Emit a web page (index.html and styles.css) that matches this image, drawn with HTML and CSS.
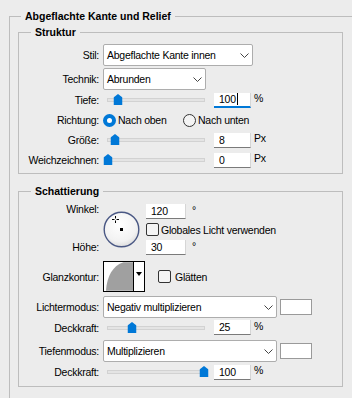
FILE: index.html
```html
<!DOCTYPE html>
<html lang="de">
<head>
  <meta charset="UTF-8">
  <title>Abgeflachte Kante und Relief</title>
  <link rel="stylesheet" href="styles.css">
</head>
<body>
  <fieldset class="group outer">
    <legend>Abgeflachte Kante und Relief</legend>

    <fieldset class="group sub struktur">
      <legend>Struktur</legend>

      <div class="row tall gap">
        <span class="lbl">Stil:</span>
        <div class="select w-stil">
          <span>Abgeflachte Kante innen</span>
          <svg class="chev" width="9" height="5" viewBox="0 0 9 5"><polyline points="0.5,0.5 4.5,4.5 8.5,0.5" fill="none" stroke="#444" stroke-width="1"/></svg>
        </div>
      </div>

      <div class="row tall">
        <span class="lbl">Technik:</span>
        <div class="select w-technik">
          <span>Abrunden</span>
          <svg class="chev" width="9" height="5" viewBox="0 0 9 5"><polyline points="0.5,0.5 4.5,4.5 8.5,0.5" fill="none" stroke="#444" stroke-width="1"/></svg>
        </div>
      </div>

      <div class="row">
        <span class="lbl">Tiefe:</span>
        <div class="slider"><svg class="thumb" style="left:10%" width="9" height="11" viewBox="0 0 9 11"><path d="M4.5 0 L9 3.5 V11 H0 V3.5 Z" fill="#0078d7"/></svg></div>
        <div class="num active">100<span class="caret"></span></div>
        <span class="unit">%</span>
      </div>

      <div class="row">
        <span class="lbl">Richtung:</span>
        <label class="opt first"><span class="radio on"></span>Nach oben</label>
        <label class="opt"><span class="radio"></span>Nach unten</label>
      </div>

      <div class="row">
        <span class="lbl">Größe:</span>
        <div class="slider"><svg class="thumb" style="left:7.7%" width="9" height="11" viewBox="0 0 9 11"><path d="M4.5 0 L9 3.5 V11 H0 V3.5 Z" fill="#0078d7"/></svg></div>
        <div class="num">8</div>
        <span class="unit">Px</span>
      </div>

      <div class="row">
        <span class="lbl">Weichzeichnen:</span>
        <div class="slider"><svg class="thumb" style="left:0%" width="9" height="11" viewBox="0 0 9 11"><path d="M4.5 0 L9 3.5 V11 H0 V3.5 Z" fill="#0078d7"/></svg></div>
        <div class="num">0</div>
        <span class="unit">Px</span>
      </div>
    </fieldset>

    <fieldset class="group sub schattierung">
      <legend>Schattierung</legend>

      <div class="angle">
        <span class="glbl winkel">Winkel:</span>
        <svg class="dial" width="37" height="37" viewBox="0 0 37 37">
          <defs>
            <radialGradient id="dialfill" cx="0.45" cy="0.35" r="0.7">
              <stop offset="0" stop-color="#ffffff"/>
              <stop offset="0.7" stop-color="#f2f2f2"/>
              <stop offset="1" stop-color="#d8d8d8"/>
            </radialGradient>
          </defs>
          <circle cx="18.5" cy="18.5" r="17.3" fill="url(#dialfill)" stroke="#4a5884" stroke-width="1.4"/>
          <rect x="17" y="17" width="3" height="3" fill="#000"/>
          <path d="M9 8.5 H11.5 M13.5 8.5 H16 M12.5 5 V7.5 M12.5 9.5 V12" stroke="#000" stroke-width="1"/>
        </svg>
        <div class="cell r1"><div class="num short">120</div><span class="unit deg">°</span></div>
        <label class="cell r2"><span class="check"></span>Globales Licht verwenden</label>
        <span class="glbl hoehe">Höhe:</span>
        <div class="cell r3"><div class="num short">30</div><span class="unit deg">°</span></div>
      </div>

      <div class="row contour-row">
        <span class="lbl">Glanzkontur:</span>
        <div class="contour">
          <svg width="30" height="29" viewBox="0 0 30 29"><path d="M2 29 C3 15 9 3 20 0 L30 0 L30 29 Z" fill="#a0a0a0"/></svg>
          <span class="contour-arrow"><svg width="6" height="4" viewBox="0 0 6 4"><path d="M0 0 H6 L3 4 Z" fill="#000"/></svg></span>
        </div>
        <label class="opt smooth"><span class="check"></span>Glätten</label>
      </div>

      <div class="row tall mode-row">
        <span class="lbl">Lichtermodus:</span>
        <div class="select w-mode">
          <span>Negativ multiplizieren</span>
          <svg class="chev" width="9" height="5" viewBox="0 0 9 5"><polyline points="0.5,0.5 4.5,4.5 8.5,0.5" fill="none" stroke="#444" stroke-width="1"/></svg>
        </div>
        <span class="swatch"></span>
      </div>

      <div class="row opacity-row">
        <span class="lbl">Deckkraft:</span>
        <div class="slider"><svg class="thumb" style="left:25%" width="9" height="11" viewBox="0 0 9 11"><path d="M4.5 0 L9 3.5 V11 H0 V3.5 Z" fill="#0078d7"/></svg></div>
        <div class="num">25</div>
        <span class="unit">%</span>
      </div>

      <div class="row tall mode-row2">
        <span class="lbl">Tiefenmodus:</span>
        <div class="select w-mode">
          <span>Multiplizieren</span>
          <svg class="chev" width="9" height="5" viewBox="0 0 9 5"><polyline points="0.5,0.5 4.5,4.5 8.5,0.5" fill="none" stroke="#444" stroke-width="1"/></svg>
        </div>
        <span class="swatch"></span>
      </div>

      <div class="row">
        <span class="lbl">Deckkraft:</span>
        <div class="slider"><svg class="thumb" style="left:100%" width="9" height="11" viewBox="0 0 9 11"><path d="M4.5 0 L9 3.5 V11 H0 V3.5 Z" fill="#0078d7"/></svg></div>
        <div class="num">100</div>
        <span class="unit">%</span>
      </div>
    </fieldset>
  </fieldset>
</body>
</html>
```

FILE: styles.css
```css
body {
  margin: 0;
  width: 352px;
  height: 398px;
  overflow: hidden;
  background: #ececec;
  color: #000;
  font-family: "Liberation Sans", Arial, sans-serif;
  font-size: 10.5px;
  letter-spacing: -0.25px;
}
.group {
  border: 1px solid #bdbdbd;
  margin: 0;
  padding: 0;
  min-width: 0;
}
.group > legend {
  font-weight: bold;
  font-size: 10.5px;
  letter-spacing: 0;
  line-height: 13px;
  padding: 0 4px;
}
.outer {
  margin: 10px 0 0 9px;
  width: 400px;
  height: 420px;
  padding: 0 8px;
  box-sizing: border-box;
}
.outer > legend {
  margin-left: 3px;
}
.sub {
  width: 325px;
  box-sizing: border-box;
}
.sub > legend {
  margin-left: 12px;
}
.struktur {
  margin-top: 3px;
  padding: 5px 0 3px;
}
.schattierung {
  margin-top: 11px;
  padding: 5px 0 4px;
}

.row {
  display: flex;
  align-items: center;
  height: 20px;
}
.row.tall {
  height: 22px;
}
.row.gap {
  margin-bottom: 2px;
}
.lbl {
  flex: none;
  width: 80px;
  margin-right: 4px;
  text-align: right;
  white-space: nowrap;
}

.select {
  display: flex;
  align-items: center;
  justify-content: space-between;
  height: 22px;
  box-sizing: border-box;
  padding: 0 3px 0 3px;
  background: #fff;
  border: 1px solid #adadad;
  border-radius: 2px;
  white-space: nowrap;
}
.w-stil { width: 150px; }
.w-technik { width: 103px; }
.w-mode { width: 174px; }

.slider {
  position: relative;
  flex: none;
  width: 98px;
  height: 4px;
  margin-left: 4px;
  box-sizing: border-box;
  background: #e4e4e4;
  border: 1px solid #d2d2d2;
}
.thumb {
  position: absolute;
  top: -5px;
  transform: translateX(-50%);
}

.num {
  flex: none;
  width: 37px;
  height: 15px;
  box-sizing: border-box;
  margin-left: 9px;
  padding-left: 5px;
  line-height: 14px;
  background: #fff;
  border-bottom: 1px solid #7a7a7a;
  border-right: 1px solid #d6d6d6;
}
.num.active {
  border-bottom: 2px solid #0078d7;
  line-height: 13px;
}
.num.short {
  width: 40px;
  margin-left: 0;
}
.caret {
  display: inline-block;
  width: 1px;
  height: 12px;
  margin-left: 1px;
  background: #000;
  vertical-align: -2px;
}
.unit {
  align-self: flex-start;
  margin-top: 2px;
  margin-left: 3px;
}
.unit.deg {
  margin-top: 1px;
  margin-left: 6px;
}

.opt {
  display: flex;
  align-items: center;
  gap: 2px;
  white-space: nowrap;
}
.opt.first {
  width: 80px;
}
.radio {
  flex: none;
  width: 13px;
  height: 13px;
  box-sizing: border-box;
  border: 1px solid #333;
  border-radius: 50%;
  background: #f4f4f4;
}
.radio.on {
  border: 4px solid #0078d7;
  background: #fff;
}
.check {
  flex: none;
  width: 13px;
  height: 13px;
  box-sizing: border-box;
  border: 1px solid #333;
  border-radius: 2px;
  background: #f4f4f4;
  margin-right: 2px;
}

.angle {
  display: grid;
  grid-template-columns: 84px 43px 1fr;
  grid-template-rows: 17px 19px 17px;
}
.glbl {
  padding-right: 4px;
  text-align: right;
  line-height: 13px;
}
.winkel {
  grid-row: 1;
  grid-column: 1;
}
.hoehe {
  grid-row: 3;
  grid-column: 1;
  align-self: center;
}
.dial {
  grid-row: 1 / 4;
  grid-column: 2;
  align-self: center;
}
.cell {
  grid-column: 3;
  display: flex;
  align-items: center;
  white-space: nowrap;
}
.r1 { grid-row: 1; }
.r2 { grid-row: 2; }
.r3 { grid-row: 3; }

.contour-row {
  height: 31px;
  margin-top: 5px;
}
.contour {
  display: flex;
  flex: none;
  width: 42px;
  height: 31px;
  box-sizing: border-box;
  border: 1px solid #000;
  background: #fff;
}
.contour svg {
  display: block;
}
.contour-arrow {
  display: flex;
  justify-content: center;
  width: 10px;
  padding-top: 10px;
  border-left: 1px solid #000;
}
.smooth {
  margin-left: 13px;
}

.mode-row {
  margin-top: 4px;
}
.opacity-row {
  height: 19px;
}
.mode-row2 {
  margin-top: 3px;
}
.swatch {
  flex: none;
  width: 32px;
  height: 16px;
  margin-left: 3px;
  box-sizing: border-box;
  border: 1px solid #9a9a9a;
  background: #fff;
}
```
